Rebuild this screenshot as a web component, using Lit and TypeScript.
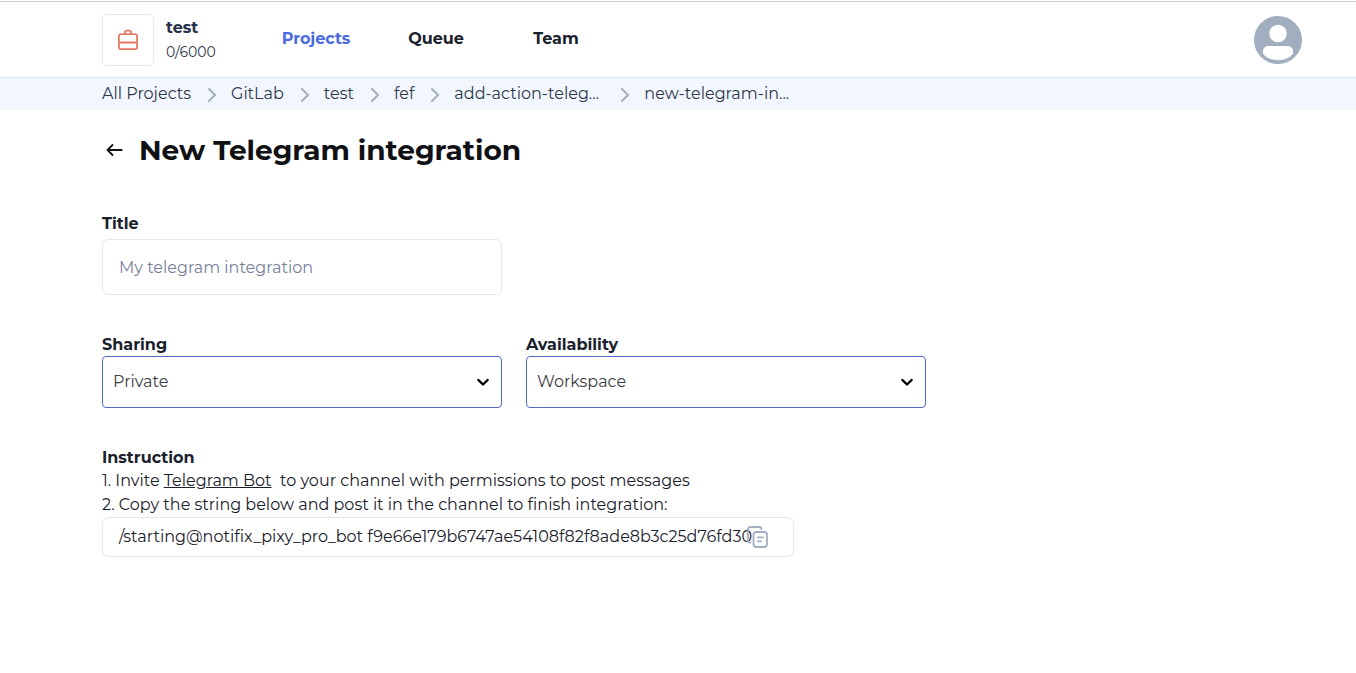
import { LitElement, html, css } from "lit";
import { customElement, property } from "lit/decorators.js";

@customElement("top-bar")
class TopBar extends LitElement {
  static styles = css`
    :host { display: flex; box-sizing: border-box; height: 76px; padding: 12px 54px 0 102px; border-bottom: 1px solid #dfe7f3; align-items: flex-start; }
    .logo { box-sizing: border-box; width: 52px; height: 52px; border: 1px solid #e4e9f5; border-radius: 4px; display: flex; align-items: center; justify-content: center; }
    .who { width: 90px; padding: 2px 0 0 12px; }
    .name { font-weight: 700; color: #27304a; line-height: 24px; }
    .count { font-size: 14px; line-height: 24px; color: #2d3748; }
    nav { display: flex; flex: 1; padding-top: 13px; }
    .item { width: 120px; text-align: center; font-weight: 700; line-height: 24px; color: #1a202c; }
    .on { color: #4c6bdf; }
    .avatar { display: block; margin-top: 2px; }
  `;
  render() {
    return html`
      <div class="logo">
        <svg width="24" height="24" viewBox="0 0 24 24" fill="none" stroke="#e37c64" stroke-width="1.8">
          <rect x="2.900" y="6.200" width="18.200" height="14.900" rx="2"/><path d="M2.900 14.500h18.200M9 6.200V4.300Q9 2.600 10.700 2.600h2.600Q15 2.600 15 4.300V6.200"/>
        </svg>
      </div>
      <div class="who"><div class="name">test</div><div class="count">0/6000</div></div>
      <nav><a class="item on">Projects</a><a class="item">Queue</a><a class="item">Team</a></nav>
      <svg class="avatar" width="48" height="48" viewBox="0 0 48 48">
        <circle cx="24" cy="24" r="24" fill="#a0aec0"/>
        <circle cx="24" cy="17.500" r="8.800" fill="#fff"/>
        <path d="M14.500 30H33.500C36.700 30 39 32.300 39 35V37.500C36 42 30 44.200 24 44.200S12 42 9 37.500V35C9 32.300 11.300 30 14.500 30Z" fill="#fff"/>
      </svg>`;
  }
}

@customElement("crumb-bar")
class CrumbBar extends LitElement {
  static styles = css`
    :host { display: flex; align-items: center; height: 32px; padding: 0 102px; background: #f2f7ff; color: #2d3748; }
    .crumb { line-height: 24px; }
    .cut { width: 150px; }
    .sep { display: block; margin: 2px 8px 0; }
  `;
  crumbs = ["All Projects", "GitLab", "test", "fef", "add-action-teleg...", "new-telegram-in..."];
  render() {
    return this.crumbs.map((c, i) => html`
      ${i ? html`<svg class="sep" width="24" height="24" viewBox="0 0 24 24" fill="none" stroke="#a6adbd" stroke-width="2" stroke-linecap="round"><path d="M10 6L16 12L10 18"/></svg>` : ""}
      <span class="crumb ${c.length > 14 ? "cut" : ""}">${c}</span>`);
  }
}

@customElement("select-field")
class SelectField extends LitElement {
  @property() label = "";
  @property() value = "";
  static styles = css`
    :host { display: block; width: 400px; }
    .label { font-weight: 700; line-height: 24px; height: 23px; }
    .box { box-sizing: border-box; height: 52px; border: 1px solid #4f6bc4; border-radius: 4px; padding: 0 10px; display: flex; align-items: center; justify-content: space-between; color: #3c4043; }
    .value { line-height: 24px; }
    .arrow { display: block; margin-right: 2px; }
  `;
  render() {
    return html`
      <div class="label">${this.label}</div>
      <div class="box"><span class="value">${this.value}</span>
        <svg class="arrow" width="12" height="12" viewBox="0 0 12 12" fill="none" stroke="#000" stroke-width="2.4" stroke-linecap="round" stroke-linejoin="round"><path d="M1.400 4L6 8.500L10.600 4"/></svg>
      </div>`;
  }
}

@customElement("app-root")
class AppRoot extends LitElement {
  static styles = css`
    :host { display: block; box-sizing: border-box; height: 673px; padding-top: 1px; overflow: hidden; background: #fff; font-family: Montserrat, Inter, sans-serif; font-size: 16px; color: #1a202c; }
    .edge { height: 1px; background: #c9cbcb; }
    main { padding: 22px 102px 0; }
    .head { display: flex; align-items: center; height: 36px; }
    .back { display: block; margin-right: 13px; }
    h1 { margin: 0; font-size: 28px; font-weight: 700; line-height: 36px; color: #101114; }
    .label { font-weight: 700; line-height: 24px; }
    .title { margin-top: 44px; }
    .input { box-sizing: border-box; width: 400px; height: 56px; margin-top: 3px; border: 1px solid #e2e8f4; border-radius: 6px; padding: 0 16px; display: flex; align-items: center; color: #77809a; }
    .selects { display: flex; gap: 24px; margin-top: 38px; }
    .guide { margin-top: 38px; line-height: 24px; }
    .guide .label { height: 23px; }
    .line { white-space: pre; }
    .code { box-sizing: border-box; width: 692px; height: 40px; border: 1px solid #e4e7ec; border-radius: 6px; padding: 0 24px 0 16px; display: flex; align-items: center; white-space: nowrap; }
    .text { width: 627px; letter-spacing: 0.01px; }
    .copy { display: block; flex: none; }
  `;
  render() {
    return html`
      <div class="edge"></div>
      <top-bar></top-bar>
      <crumb-bar></crumb-bar>
      <main>
        <div class="head">
          <svg class="back" width="24" height="24" viewBox="0 0 24 24" fill="none" stroke="#101114" stroke-width="1.8" stroke-linecap="round" stroke-linejoin="round"><path d="M19.700 12H5.500M10.500 7L5.500 12L10.500 17"/></svg>
          <h1>New Telegram integration</h1>
        </div>
        <div class="label title">Title</div>
        <div class="input">My telegram integration</div>
        <div class="selects">
          <select-field label="Sharing" value="Private"></select-field>
          <select-field label="Availability" value="Workspace"></select-field>
        </div>
        <div class="guide">
          <div class="label">Instruction</div>
          <div class="line">1. Invite <u>Telegram Bot</u>  to your channel with permissions to post messages</div>
          <div class="line">2. Copy the string below and post it in the channel to finish integration:</div>
          <div class="code"><span class="text">/starting@notifix_pixy_pro_bot f9e66e179b6747ae54108f82f8ade8b3c25d76fd30</span>
            <svg class="copy" width="24" height="24" viewBox="0 0 24 24" fill="none" stroke="#a3aec2" stroke-width="1.8" stroke-linecap="round" stroke-linejoin="round">
              <path d="M4.500 17.500Q2 17.500 2 15V4.500Q2 2 4.500 2H13Q15.500 2 15.500 4"/>
              <rect x="7.500" y="7" width="13.500" height="15" rx="3"/><path d="M11.500 12.300h5.500M11.500 16.300h3.500"/>
            </svg>
          </div>
        </div>
      </main>`;
  }
}
